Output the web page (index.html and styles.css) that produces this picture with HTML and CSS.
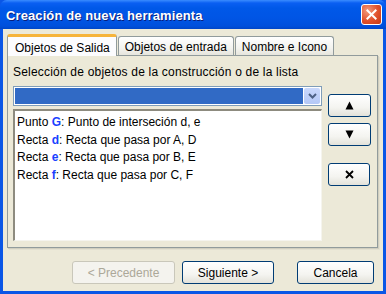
FILE: index.html
```html
<!DOCTYPE html>
<html>
<head>
<meta charset="utf-8">
<link rel="stylesheet" href="styles.css">
</head>
<body>
<div class="window">
  <div class="titlebar">
    <span class="title">Creación de nueva herramienta</span>
    <span class="close"><svg width="21" height="21" viewBox="0 0 21 21"><path d="M6 6 L15 15 M15 6 L6 15" stroke="#fff" stroke-width="2.2" stroke-linecap="square"/></svg></span>
  </div>
  <div class="client">
    <div class="tabs">
      <div class="tab active">Objetos de Salida</div>
      <div class="tab">Objetos de entrada</div>
      <div class="tab">Nombre e Icono</div>
    </div>
    <div class="panel">
      <div class="label">Selección de objetos de la construcción o de la lista</div>
      <div class="main">
        <div class="left">
          <div class="combo">
            <div class="combo-field"></div>
            <div class="combo-btn"><svg width="9" height="6" viewBox="0 0 9 6"><path d="M1 1 L4.5 4.5 L8 1" fill="none" stroke="#4D6185" stroke-width="2"/></svg></div>
          </div>
          <div class="list">
            <div class="row">Punto <b>G</b>: Punto de interseción d, e</div>
            <div class="row">Recta <b>d</b>: Recta que pasa por A, D</div>
            <div class="row">Recta <b>e</b>: Recta que pasa por B, E</div>
            <div class="row">Recta <b>f</b>: Recta que pasa por C, F</div>
          </div>
        </div>
        <div class="side">
          <div class="btn sbtn up"><svg width="9" height="9" viewBox="0 0 9 9"><path d="M4.5 0.5 L8.5 8.5 L0.5 8.5 Z" fill="#000"/></svg></div>
          <div class="btn sbtn down"><svg width="9" height="9" viewBox="0 0 9 9"><path d="M0.5 0.5 L8.5 0.5 L4.5 8.5 Z" fill="#000"/></svg></div>
          <div class="btn sbtn del"><svg width="9" height="9" viewBox="0 0 9 9"><path d="M1 1 L8 8 M8 1 L1 8" stroke="#000" stroke-width="1.8"/></svg></div>
        </div>
      </div>
    </div>
    <div class="footer">
      <div class="btn fbtn disabled">&lt; Precedente</div>
      <div class="btn fbtn next">Siguiente &gt;</div>
      <div class="btn fbtn cancel">Cancela</div>
    </div>
  </div>
</div>
</body>
</html>
```
FILE: styles.css
```css
html, body {
  margin: 0;
  padding: 0;
  width: 386px;
  height: 294px;
  overflow: hidden;
  font-family: "Liberation Sans", Arial, sans-serif;
  font-size: 12px;
}
.window {
  width: 386px;
  height: 294px;
  box-sizing: border-box;
  display: flex;
  flex-direction: column;
  background: #0A56E6;
}
.titlebar {
  height: 29px;
  flex: none;
  display: flex;
  align-items: center;
  justify-content: space-between;
  padding: 0 4px 0 6px;
  background: linear-gradient(to bottom, #3A8CFF 0px, #0A5FF2 3px, #0058E8 8px, #0055E5 18px, #0050DC 26px, #0046C8 29px);
  border-radius: 7px 7px 0 0;
}
.title {
  color: #fff;
  font-weight: bold;
  font-size: 13px;
  font-family: "Liberation Sans", Arial, sans-serif;
  letter-spacing: 0.1px;
  text-shadow: 1px 1px 0 #0A1E7A;
  margin-top: 1px;
}
.close {
  width: 21px;
  height: 21px;
  box-sizing: border-box;
  border: 1px solid #fff;
  border-radius: 3px;
  background: radial-gradient(circle at 30% 30%, #F39B7E, #E0502B 55%, #C43A16);
  display: flex;
  align-items: center;
  justify-content: center;
  margin-top: -1px;
}
.close svg { display: block; }
.client {
  flex: 1;
  margin: 0 3px 3px 3px;
  background: #ECE9D8;
  display: flex;
  flex-direction: column;
  padding: 4px 5px 0 4px;
}
.tabs {
  display: flex;
  height: 22px;
  align-items: flex-end;
  position: relative;
  z-index: 2;
}
.tab {
  height: 19px;
  box-sizing: border-box;
  padding: 3px 6px 0 6px;
  border: 1px solid #919B9C;
  border-bottom: none;
  border-radius: 3px 3px 0 0;
  background: linear-gradient(to bottom, #FFFFFF, #F3F3EF 60%, #E6E5DD);
  color: #000;
  margin-left: 1px;
  white-space: nowrap;
}
.tab.active {
  height: 22px;
  margin-left: 0;
  padding-top: 4px;
  background: #FCFCFE;
  border-top: 3px solid #F6B43A;
  border-radius: 3px 3px 0 0;
  margin-bottom: -1px;
  padding-left: 7px;
  padding-right: 6px;
}
.panel {
  height: 193px;
  box-sizing: border-box;
  width: 371px;
  border: 1px solid #919B9C;
  box-shadow: 1px 1px 0 #D0CEBF, 2px 2px 0 #E3E0D0;
  background: #ECE9D8;
  padding: 9px 5px 0 5px;
  display: flex;
  flex-direction: column;
}
.label {
  height: 14px;
  line-height: 14px;
  color: #000;
  letter-spacing: 0.2px;
}
.main {
  display: flex;
  margin-top: 7px;
}
.left {
  width: 309px;
  display: flex;
  flex-direction: column;
}
.combo {
  height: 20px;
  box-sizing: border-box;
  border: 1px solid #7F9DB9;
  background: #fff;
  display: flex;
  padding: 1px;
}
.combo-field {
  flex: 1;
  background: #316AC5;
}
.combo-btn {
  width: 16px;
  margin-left: 1px;
  background: linear-gradient(to bottom, #C9D8FC, #B4C8F6);
  border-radius: 2px;
  display: flex;
  align-items: center;
  justify-content: center;
}
.list {
  margin-top: 3px;
  height: 132px;
  box-sizing: border-box;
  background: #fff;
  border-top: 2px solid #8D8B7F;
  border-left: 2px solid #8D8B7F;
  border-right: 1px solid #F5F4EE;
  border-bottom: 1px solid #F5F4EE;
  padding: 3px 0 0 2px;
}
.row {
  height: 17.7px;
  line-height: 17.7px;
  white-space: nowrap;
}
.row b {
  color: #1A3FFF;
}
.side {
  display: flex;
  flex-direction: column;
  margin-left: 6px;
  padding-top: 8px;
}
.btn {
  box-sizing: border-box;
  border: 1px solid #003C74;
  border-radius: 3px;
  background: linear-gradient(to bottom, #FFFFFF, #F4F4F0 60%, #E3E2DA);
  display: flex;
  align-items: center;
  justify-content: center;
  color: #000;
}
.sbtn {
  width: 43px;
  height: 23px;
}
.sbtn.down { margin-top: 6px; }
.sbtn.del { margin-top: 17px; width: 42px; }
.footer {
  display: flex;
  align-items: center;
  padding-top: 13px;
  padding-left: 65px;
}
.fbtn {
  height: 23px;
}
.fbtn.disabled {
  width: 103px;
  border-color: #C9C7BA;
  background: #F4F3EE;
  color: #ACA899;
}
.fbtn.next {
  width: 92px;
  margin-left: 7px;
}
.fbtn.cancel {
  width: 77px;
  margin-left: 23px;
}
```
